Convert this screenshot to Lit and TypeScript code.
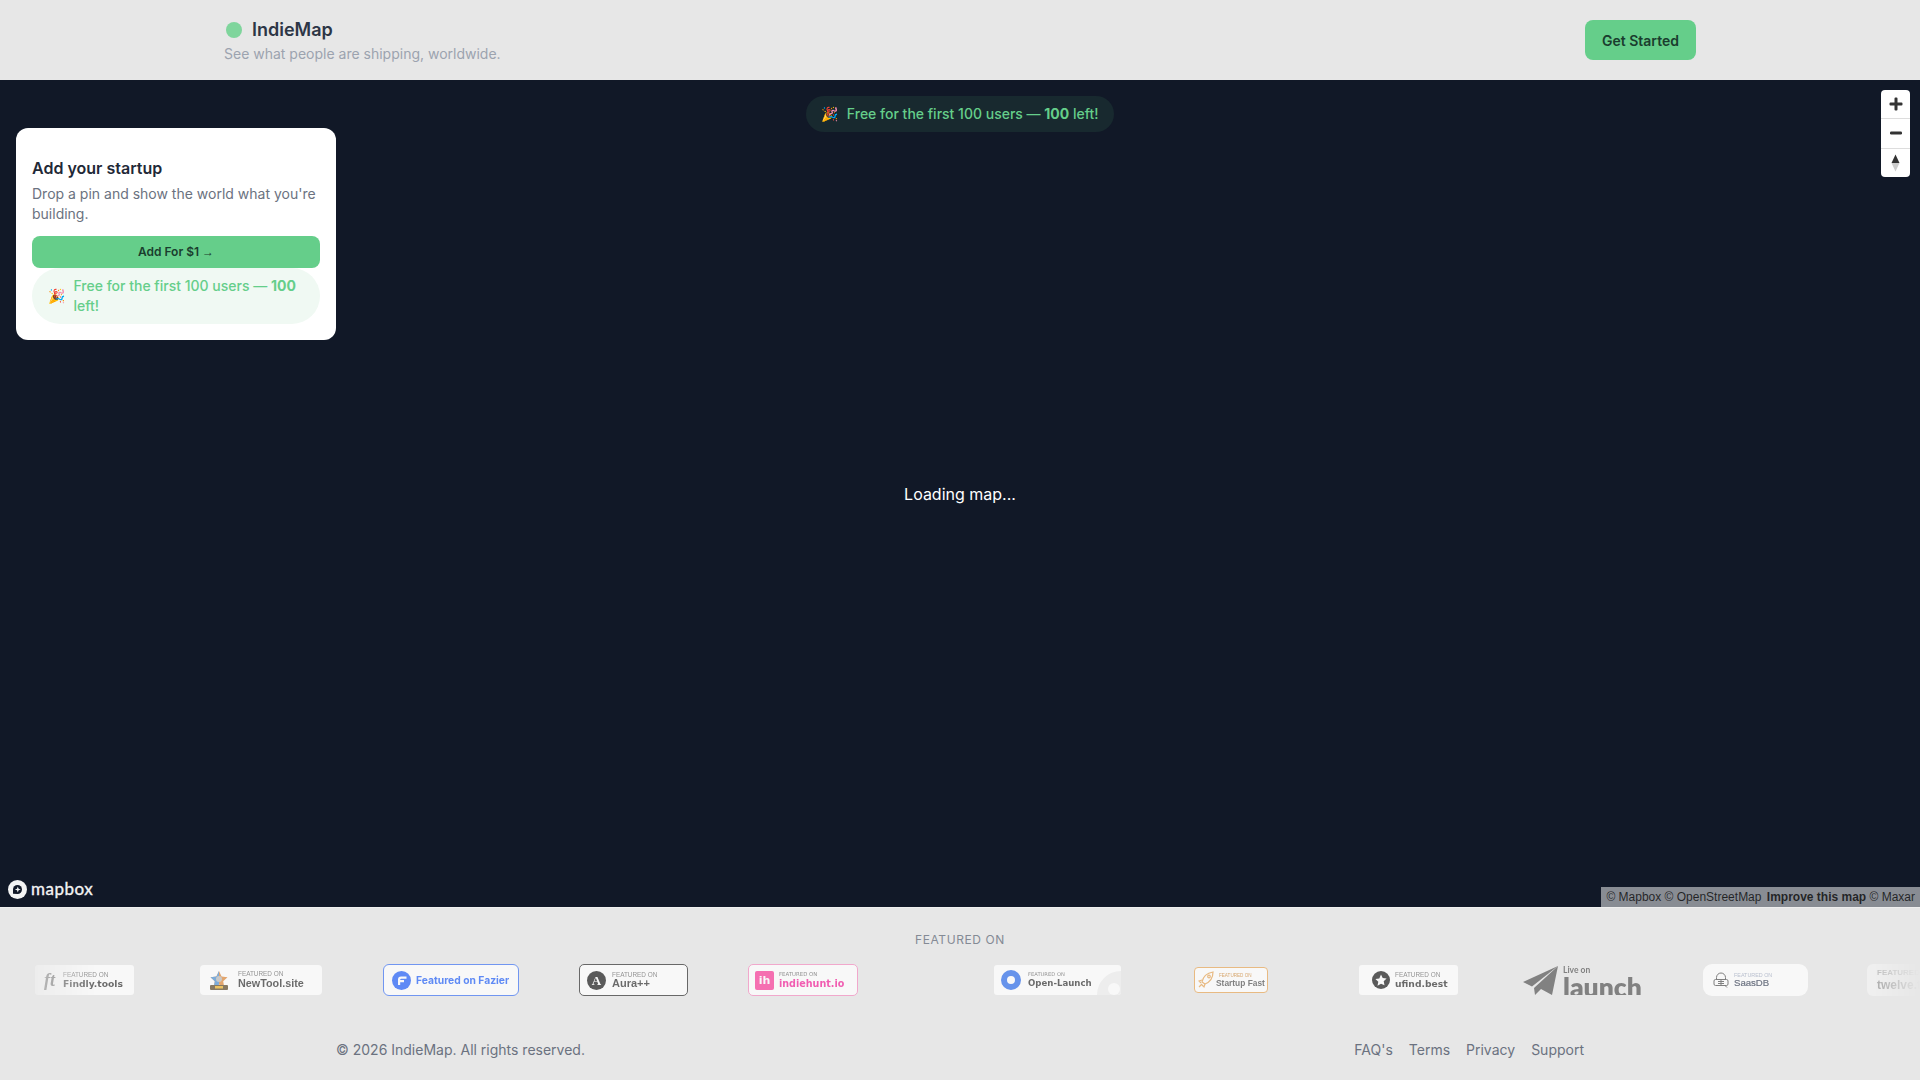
import { LitElement, html, css, svg } from "lit";
import { customElement } from "lit/decorators.js";

const plus = svg`<path d="M5.500 1.500a1 1 0 0 1 1-1h1a1 1 0 0 1 1 1v4h4a1 1 0 0 1 1 1v1a1 1 0 0 1-1 1h-4v4a1 1 0 0 1-1 1h-1a1 1 0 0 1-1-1v-4h-4a1 1 0 0 1-1-1v-1a1 1 0 0 1 1-1h4z" fill="#333"/>`;

@customElement("app-root")
export class AppRoot extends LitElement {
  static styles = css`
    :host { display: flex; flex-direction: column; width: 100%; height: 100vh; overflow: hidden; background: #e7e7e7; font-family: Inter, "Liberation Sans", sans-serif; color: #1f2937; }
    * { box-sizing: border-box; }
    a { color: inherit; text-decoration: none; }
    svg { flex: none; }
    .head { flex: none; height: 80px; padding: 0 224px; display: flex; align-items: center; justify-content: space-between; }
    .brand { display: flex; align-items: center; gap: 10px; height: 28px; padding: 0 0 1px 2px; font-size: 18px; font-weight: 600; color: #2d3646; }
    .dot { width: 16px; height: 16px; border-radius: 50%; background: #7fd59c; }
    .sub { font-size: 14px; line-height: 20px; color: #9ca3af; }
    .cta { width: 111px; height: 40px; border-radius: 8px; background: #65ce8a; color: #1a3d2e; display: flex; align-items: center; justify-content: center; font-size: 14px; font-weight: 600; }
    .map { flex: none; height: 827px; background: #111827; position: relative; display: flex; align-items: center; justify-content: center; color: #fff; font-size: 16px; line-height: 24px; }
    .banner { position: absolute; top: 16px; left: 806px; width: 308px; height: 36px; border-radius: 18px; background: #18292f; color: #65ce8a; display: flex; align-items: center; justify-content: center; gap: 8px; font-size: 14px; line-height: 20px; font-weight: 500; white-space: nowrap; }
    .banner b, .pill b { font-weight: 700; }
    .emoji { font-family: "Noto Color Emoji", "Apple Color Emoji", sans-serif; flex: none; }
    .card { position: absolute; top: 48px; left: 16px; width: 320px; height: 212px; padding: 28px 16px 16px; background: #fff; border-radius: 12px; color: #1f2937; }
    .card h2 { margin: 0 0 4px; font-size: 16px; line-height: 24px; font-weight: 600; }
    .card p { margin: 0 0 12px; font-size: 14px; line-height: 20px; color: #6b7280; }
    .add { height: 32px; border-radius: 8px; background: #65ce8a; color: #1a3d2e; font-size: 12px; font-weight: 600; display: flex; align-items: center; justify-content: center; gap: 3px; }
    .arrow { font-family: "Liberation Sans", sans-serif; font-weight: 400; }
    .pill { height: 56px; border-radius: 28px; background: #f0f9f3; color: #65ce8a; display: flex; align-items: center; gap: 8px; padding: 0 16px; font-size: 14px; line-height: 20px; font-weight: 500; }
    .zoomctl { position: absolute; top: 10px; right: 10px; width: 29px; height: 87px; background: #fff; border-radius: 4px; display: flex; flex-direction: column; }
    .zoomctl span { flex: 1; display: flex; align-items: center; justify-content: center; }
    .zoomctl span + span { border-top: 1px solid #ddd; }
    .logo { position: absolute; left: 8px; bottom: 8px; display: flex; align-items: center; gap: 4px; font-family: Lato, sans-serif; font-weight: 400; -webkit-text-stroke: 0.35px #f4f4f4; font-size: 17px; line-height: 20px; letter-spacing: 0.5px; color: #f4f4f4; }
    .attr { position: absolute; right: 0; bottom: 0; height: 20px; padding: 0 5px; background: rgba(255,255,255,.5); color: rgba(0,0,0,.75); font-family: "Liberation Sans", Arial, sans-serif; font-size: 12px; line-height: 20px; display: flex; gap: 3.33px; white-space: nowrap; }
    .attr b { font-weight: 700; margin-left: 2px; }
    .foot { flex: 1; border-top: 1px solid #efefef; padding-top: 24px; display: flex; flex-direction: column; }
    .ft-title { text-align: center; font-size: 12px; line-height: 16px; font-weight: 400; letter-spacing: 0.6px; color: #848a95; }
    .marquee { margin-top: 16px; height: 32px; overflow: hidden; display: flex; align-items: center; padding-left: 35px; -webkit-mask-image: linear-gradient(to right, transparent, #000 5%, #000 95%, transparent); mask-image: linear-gradient(to right, transparent, #000 5%, #000 95%, transparent); }
    .b { flex: none; position: relative; display: flex; align-items: center; background: #fff; opacity: .7; filter: blur(.25px); overflow: hidden; margin-left: 60px; font-family: "Liberation Sans", sans-serif; white-space: nowrap; }
    .col { display: flex; flex-direction: column; }
    .f { font-size: 6.4px; line-height: 7px; color: #6f6f6f; }
    .n { font-size: 10.5px; line-height: 11px; font-weight: 700; color: #363636; }
    .wide { font-family: "DejaVu Sans", sans-serif; font-size: 9.2px; line-height: 11px; }
    .findly { margin-left: 0; width: 99px; height: 30px; border-radius: 3px; padding-left: 9px; gap: 7px; }
    .ftmark { width: 12px; font-family: "Liberation Serif", serif; font-style: italic; font-weight: 700; font-size: 18px; color: #4a4a4a; }
    .newtool { margin-left: 66px; width: 122px; height: 30px; border-radius: 4px; padding-left: 8px; gap: 8px; }
    .newtool .n { font-size: 10.800px; line-height: 13px; }
    .fazier { margin-left: 61px; width: 136px; height: 32px; border-radius: 6px; border: 1px solid #3f74f5; padding-left: 8px; gap: 5px; font-family: Inter, sans-serif; font-size: 10.3px; font-weight: 700; color: #2563fb; }
    .aura { width: 109px; height: 32px; border-radius: 5px; border: 1px solid #333; padding-left: 7px; gap: 6px; }
    .aura .n { font-size: 11px; }
    .hunt { width: 110px; height: 32px; border-radius: 5px; border: 1px solid #f58dc0; padding-left: 6px; gap: 5px; }
    .hunt .f { font-family: "DejaVu Sans", sans-serif; font-size: 5.4px; }
    .hunt .n { font-family: "DejaVu Sans", sans-serif; font-size: 9.6px; color: #f5229a; }
    .ih { width: 19px; height: 19px; border-radius: 2px; background: #fb3c9a; color: #fff; font-weight: 700; font-size: 11px; display: flex; align-items: center; justify-content: center; font-family: "DejaVu Sans", sans-serif; }
    .open { margin-left: 136px; width: 127px; height: 30px; border-radius: 3px; padding-left: 7px; gap: 7px; }
    .open .f { font-family: "DejaVu Sans", sans-serif; font-size: 5.2px; }
    .open .n { font-family: "DejaVu Sans", sans-serif; font-size: 8.6px; }
    .arc { position: absolute; right: -24px; bottom: -24px; width: 48px; height: 48px; border-radius: 50%; background: #f0f0f0; }
    .arcdot { position: absolute; right: 1px; bottom: 0; width: 12px; height: 12px; border-radius: 50%; background: #fff; }
    .fast { margin-left: 73px; width: 74px; height: 26px; border-radius: 4px; border: 1px solid #e9a757; padding-left: 3px; gap: 1px; }
    .fast .f { font-size: 4.6px; line-height: 6px; color: #d18c3c; padding-left: 3px; }
    .fast .n { font-size: 8.4px; line-height: 9px; color: #555; }
    .ufind { margin-left: 91px; width: 99px; height: 30px; border-radius: 3px; padding-left: 13px; gap: 5px; }
    .launch { margin-left: 65px; width: 119px; height: 30px; background: none; align-items: flex-start; gap: 5px; }
    .launch .live { font-family: Lato, sans-serif; font-weight: 700; font-size: 8.5px; line-height: 10px; color: #565656; }
    .launch .word { font-family: Lato, sans-serif; font-weight: 800; font-size: 26.5px; line-height: 24px; color: #565656; margin-top: 0; }
    .saas { margin-left: 61px; width: 105px; height: 32px; border-radius: 9px; padding-left: 10px; gap: 5px; }
    .saas .f { font-size: 5.4px; line-height: 6px; color: #a5aec4; }
    .saas .n { font-size: 9.6px; line-height: 10px; font-weight: 400; color: #3a4358; -webkit-text-stroke: 0.2px #3a4358; }
    .twelve { margin-left: 59px; width: 130px; height: 32px; border-radius: 6px; padding-left: 10px; }
    .twelve .f { font-size: 8px; line-height: 10px; font-weight: 700; }
    .twelve .n { font-size: 12px; line-height: 14px; }
    .legal { margin-top: 44px; padding: 0 336px; display: flex; justify-content: space-between; font-size: 14px; line-height: 20px; color: #6b7280; }
    .links { display: flex; gap: 16px; }
  `;

  render() {
    return html`
      <header class="head">
        <div>
          <div class="brand"><span class="dot"></span>IndieMap</div>
          <div class="sub">See what people are shipping, worldwide.</div>
        </div>
        <a class="cta" href="#">Get Started</a>
      </header>
      <main class="map">
        Loading map...
        <div class="banner"><span class="emoji">🎉</span><span>Free for the first 100 users — <b>100</b> left!</span></div>
        <section class="card">
          <h2>Add your startup</h2>
          <p>Drop a pin and show the world what you're building.</p>
          <div class="add">Add For $1 <span class="arrow">→</span></div>
          <div class="pill"><span class="emoji">🎉</span><span>Free for the first 100 users — <b>100</b> left!</span></div>
        </section>
        <div class="zoomctl">
          <span><svg width="14" height="14" viewBox="0 0 14 14">${plus}</svg></span>
          <span><svg width="14" height="14" viewBox="0 0 14 14"><rect x="1" y="5.500" width="12" height="3" rx="1.200" fill="#333"/></svg></span>
          <span><svg width="11" height="18" viewBox="0 0 11 18"><path d="M5.500 0.500L9.500 9H1.500z" fill="#333"/><path d="M5.500 17.500L1.500 9H9.500z" fill="#ccc"/></svg></span>
        </div>
        <div class="logo">
          <svg width="19" height="19" viewBox="0 0 19 19"><circle cx="9.500" cy="9.500" r="9.500" fill="#f4f4f4"/><path d="M5 13.800V9.500a4.500 4.500 0 1 1 4.500 4.500z" fill="#111827"/><path d="M9.800 6.500l.8 2.200 2.200.8-2.200.8-.8 2.200-.8-2.200-2.200-.8 2.200-.8z" fill="#f4f4f4"/></svg>
          <span>mapbox</span>
        </div>
        <div class="attr"><span>© Mapbox</span><span>© OpenStreetMap</span><b>Improve this map</b><span>© Maxar</span></div>
      </main>
      <footer class="foot">
        <div class="ft-title">FEATURED ON</div>
        <div class="marquee">
          <div class="b findly"><span class="ftmark">ft</span><div class="col"><span class="f">FEATURED ON</span><span class="n wide">Findly.tools</span></div></div>
          <div class="b newtool">
            <svg width="22" height="20" viewBox="0 0 22 20"><path d="M11 1l2.600 5.400 5.900.8-4.300 4.100 1 5.900L11 14.400 5.800 17.200l1-5.900L2.500 7.200l5.900-.8z" fill="#e08a3c"/><path d="M11 1v13.400L5.800 17.200l1-5.900L2.500 7.200l5.900-.8z" fill="#4f93d6"/><circle cx="11" cy="9" r="3" fill="#bbb"/><rect x="2" y="15" width="18" height="5" rx="1" fill="#5e4a2c"/><rect x="7" y="16" width="8" height="2.500" fill="#f0b429"/></svg>
            <div class="col"><span class="f">FEATURED ON</span><span class="n">NewTool.site</span></div>
          </div>
          <div class="b fazier">
            <svg width="19" height="19" viewBox="0 0 19 19"><circle cx="9.500" cy="9.500" r="9.500" fill="#2563fb"/><path d="M6 14V8.500a3 3 0 0 1 3-3h5.500v2.300H9.200a1 1 0 0 0-1 1V9H12v2.200H8.200V14z" fill="#fff"/></svg>
            <span>Featured on Fazier</span>
          </div>
          <div class="b aura">
            <svg width="19" height="19" viewBox="0 0 19 19"><circle cx="9.500" cy="9.500" r="9.500" fill="#1f1f1f"/><text x="9.500" y="14" text-anchor="middle" font-family="Liberation Serif" font-weight="700" font-size="13" fill="#fff">A</text></svg>
            <div class="col"><span class="f">FEATURED ON</span><span class="n">Aura++</span></div>
          </div>
          <div class="b hunt"><span class="ih">ih</span><div class="col"><span class="f">FEATURED ON</span><span class="n">indiehunt.io</span></div></div>
          <div class="b open">
            <svg width="20" height="20" viewBox="0 0 20 20"><circle cx="10" cy="10" r="7" fill="none" stroke="#2f6fed" stroke-width="6"/></svg>
            <div class="col"><span class="f">FEATURED ON</span><span class="n">Open-Launch</span></div>
            <span class="arc"></span><span class="arcdot"></span>
          </div>
          <div class="b fast">
            <svg width="17" height="18" viewBox="0 0 17 18" fill="none" stroke="#e9a757" stroke-width="1.200"><path d="M4 11C5 6 9 2 15 1c0 6-3 10-8 12z"/><circle cx="11" cy="5.500" r="1.300"/><path d="M4 9L1 10l2 2M7 13l-1 3-2-2M1 16l3-3"/></svg>
            <div class="col"><span class="f">FEATURED ON</span><span class="n">Startup Fast</span></div>
          </div>
          <div class="b ufind">
            <svg width="18" height="18" viewBox="0 0 18 18"><circle cx="9" cy="9" r="9" fill="#1f1f1f"/><path d="M9 3.500l1.700 3.600 3.900.5-2.900 2.700.8 3.900L9 12.800l-3.500 1.900.8-3.900-2.900-2.700 3.900-.5z" fill="#fff"/></svg>
            <div class="col"><span class="f">FEATURED ON</span><span class="n wide">ufind.best</span></div>
          </div>
          <div class="b launch">
            <svg width="35" height="30" viewBox="0 0 35 30"><path d="M35 1L0 17l9 4.500z" fill="#565656"/><path d="M35 1L11 23l1 7 6-6 11 6z" fill="#565656"/></svg>
            <div class="col"><span class="live">Live on</span><span class="word">launch</span></div>
          </div>
          <div class="b saas">
            <svg width="16" height="16" viewBox="0 0 16 16" fill="none" stroke="#555" stroke-width="1"><path d="M3.500 8V5.500a4.500 4.500 0 0 1 9 0V8"/><rect x="1" y="7.500" width="14" height="6" rx="1.500"/><path d="M5 9.500h6M5 11.500h6M8 7.500v6M12 13.500l2 2"/></svg>
            <div class="col"><span class="f">FEATURED ON</span><span class="n">SaasDB</span></div>
          </div>
          <div class="b twelve"><div class="col"><span class="f">FEATURED ON</span><span class="n">twelve.tools</span></div></div>
        </div>
        <div class="legal">
          <span>© 2026 IndieMap. All rights reserved.</span>
          <nav class="links"><a href="#">FAQ's</a><a href="#">Terms</a><a href="#">Privacy</a><a href="#">Support</a></nav>
        </div>
      </footer>
    `;
  }
}
